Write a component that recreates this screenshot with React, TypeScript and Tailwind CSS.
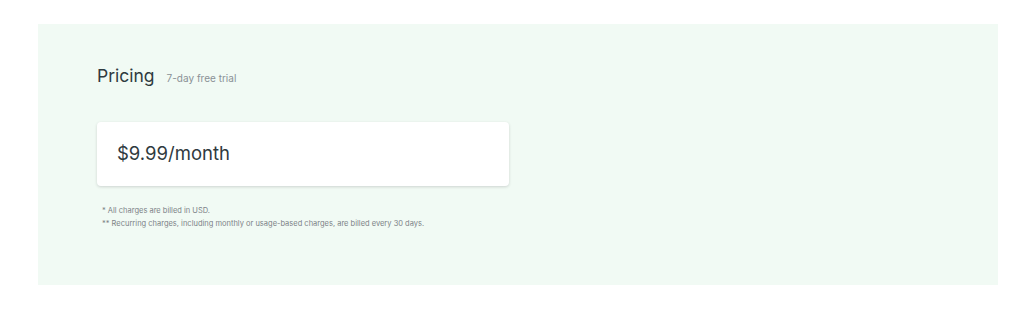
export default function App() {
  return (
    <div className="h-[313px] w-[1024px] bg-white pt-[24px] font-['Inter',sans-serif]">
      <section className="ml-[38px] flex h-[261px] w-[960px] flex-col bg-[#f1faf4] pl-[59px] pt-[40px]">
        <div className="flex items-baseline gap-[12px]">
          <h2 className="text-[17.5px] leading-[24px] text-[#2f3a40]">Pricing</h2>
          <span className="text-[10px] text-[#8a9196]">7-day free trial</span>
        </div>
        <div className="mt-[34px] flex h-[64px] w-[412px] items-center rounded-[4px] bg-white px-[20px] shadow-[0_1px_3px_rgba(63,63,68,0.2)]">
          <span className="text-[18.5px] text-[#2f3a40]">$9.99/month</span>
        </div>
        <div className="mt-[19px] pl-[5px] text-[7.5px] leading-[12.5px] text-[#7c8287]">
          <p>* All charges are billed in USD.</p>
          <p>** Recurring charges, including monthly or usage-based charges, are billed every 30 days.</p>
        </div>
      </section>
    </div>
  )
}
